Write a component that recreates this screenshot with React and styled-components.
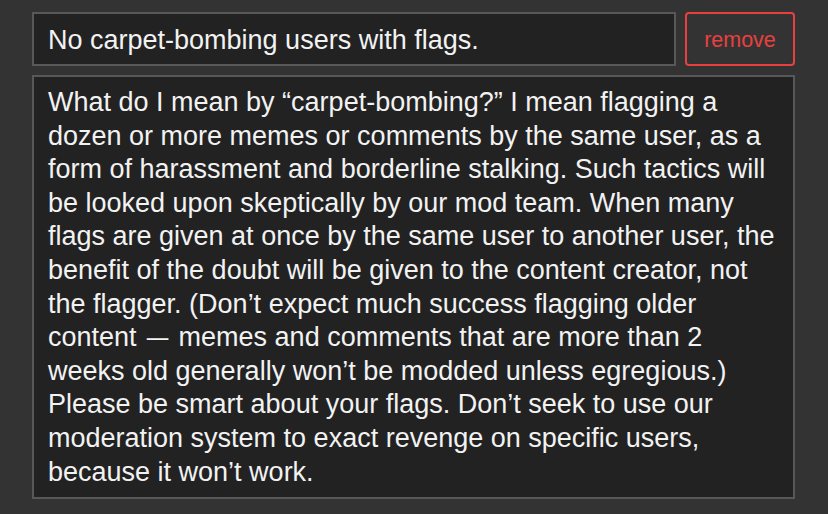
import styled, { createGlobalStyle } from "styled-components";

const GlobalStyle = createGlobalStyle`
  html, body {
    margin: 0;
    padding: 0;
    background: #333333;
  }
  body {
    font-family: "Liberation Sans", Arial, Helvetica, sans-serif;
  }
`;

const Page = styled.div`
  width: 828px;
  height: 514px;
  box-sizing: border-box;
  padding: 12px 33px 0 32px;
  display: flex;
  flex-direction: column;
  gap: 9px;
`;

const Row = styled.div`
  display: flex;
  gap: 9px;
  height: 54px;
`;

const TitleBox = styled.div`
  flex: 1;
  box-sizing: border-box;
  background: #222222;
  border: 2px solid #585858;
  color: #f2f2f2;
  font-size: 27px;
  display: flex;
  align-items: center;
  padding: 2px 14px 0;
`;

const RemoveButton = styled.button`
  width: 110px;
  box-sizing: border-box;
  background: transparent;
  border: 2px solid #e8403f;
  border-radius: 4px;
  color: #e8403f;
  font-family: "Liberation Sans", Arial, sans-serif;
  font-size: 21.5px;
  padding: 3px 0 0;
  cursor: pointer;
`;

const Body = styled.div`
  box-sizing: border-box;
  height: 424px;
  background: #222222;
  border: 2px solid #585858;
  color: #f2f2f2;
  font-size: 27px;
  line-height: 33.6px;
  padding: 9px 14px 7px;
  white-space: nowrap;
  overflow: hidden;
`;

const Dash = styled.span`
  display: inline-block;
  transform: scaleX(0.8);
`;

const lines = [
  "What do I mean by \u201ccarpet-bombing?\u201d I mean flagging a",
  "dozen or more memes or comments by the same user, as a",
  "form of harassment and borderline stalking. Such tactics will",
  "be looked upon skeptically by our mod team. When many",
  "flags are given at once by the same user to another user, the",
  "benefit of the doubt will be given to the content creator, not",
  "the flagger. (Don\u2019t expect much success flagging older",
  <>
    content <Dash>{"\u2014"}</Dash> memes and comments that are more than 2
  </>,
  "weeks old generally won\u2019t be modded unless egregious.)",
  "Please be smart about your flags. Don\u2019t seek to use our",
  "moderation system to exact revenge on specific users,",
  "because it won\u2019t work.",
];

export default function App() {
  return (
    <>
      <GlobalStyle />
      <Page>
        <Row>
          <TitleBox>No carpet-bombing users with flags.</TitleBox>
          <RemoveButton>remove</RemoveButton>
        </Row>
        <Body>
          {lines.map((l, i) => (
            <div key={i}>{l}</div>
          ))}
        </Body>
      </Page>
    </>
  );
}
